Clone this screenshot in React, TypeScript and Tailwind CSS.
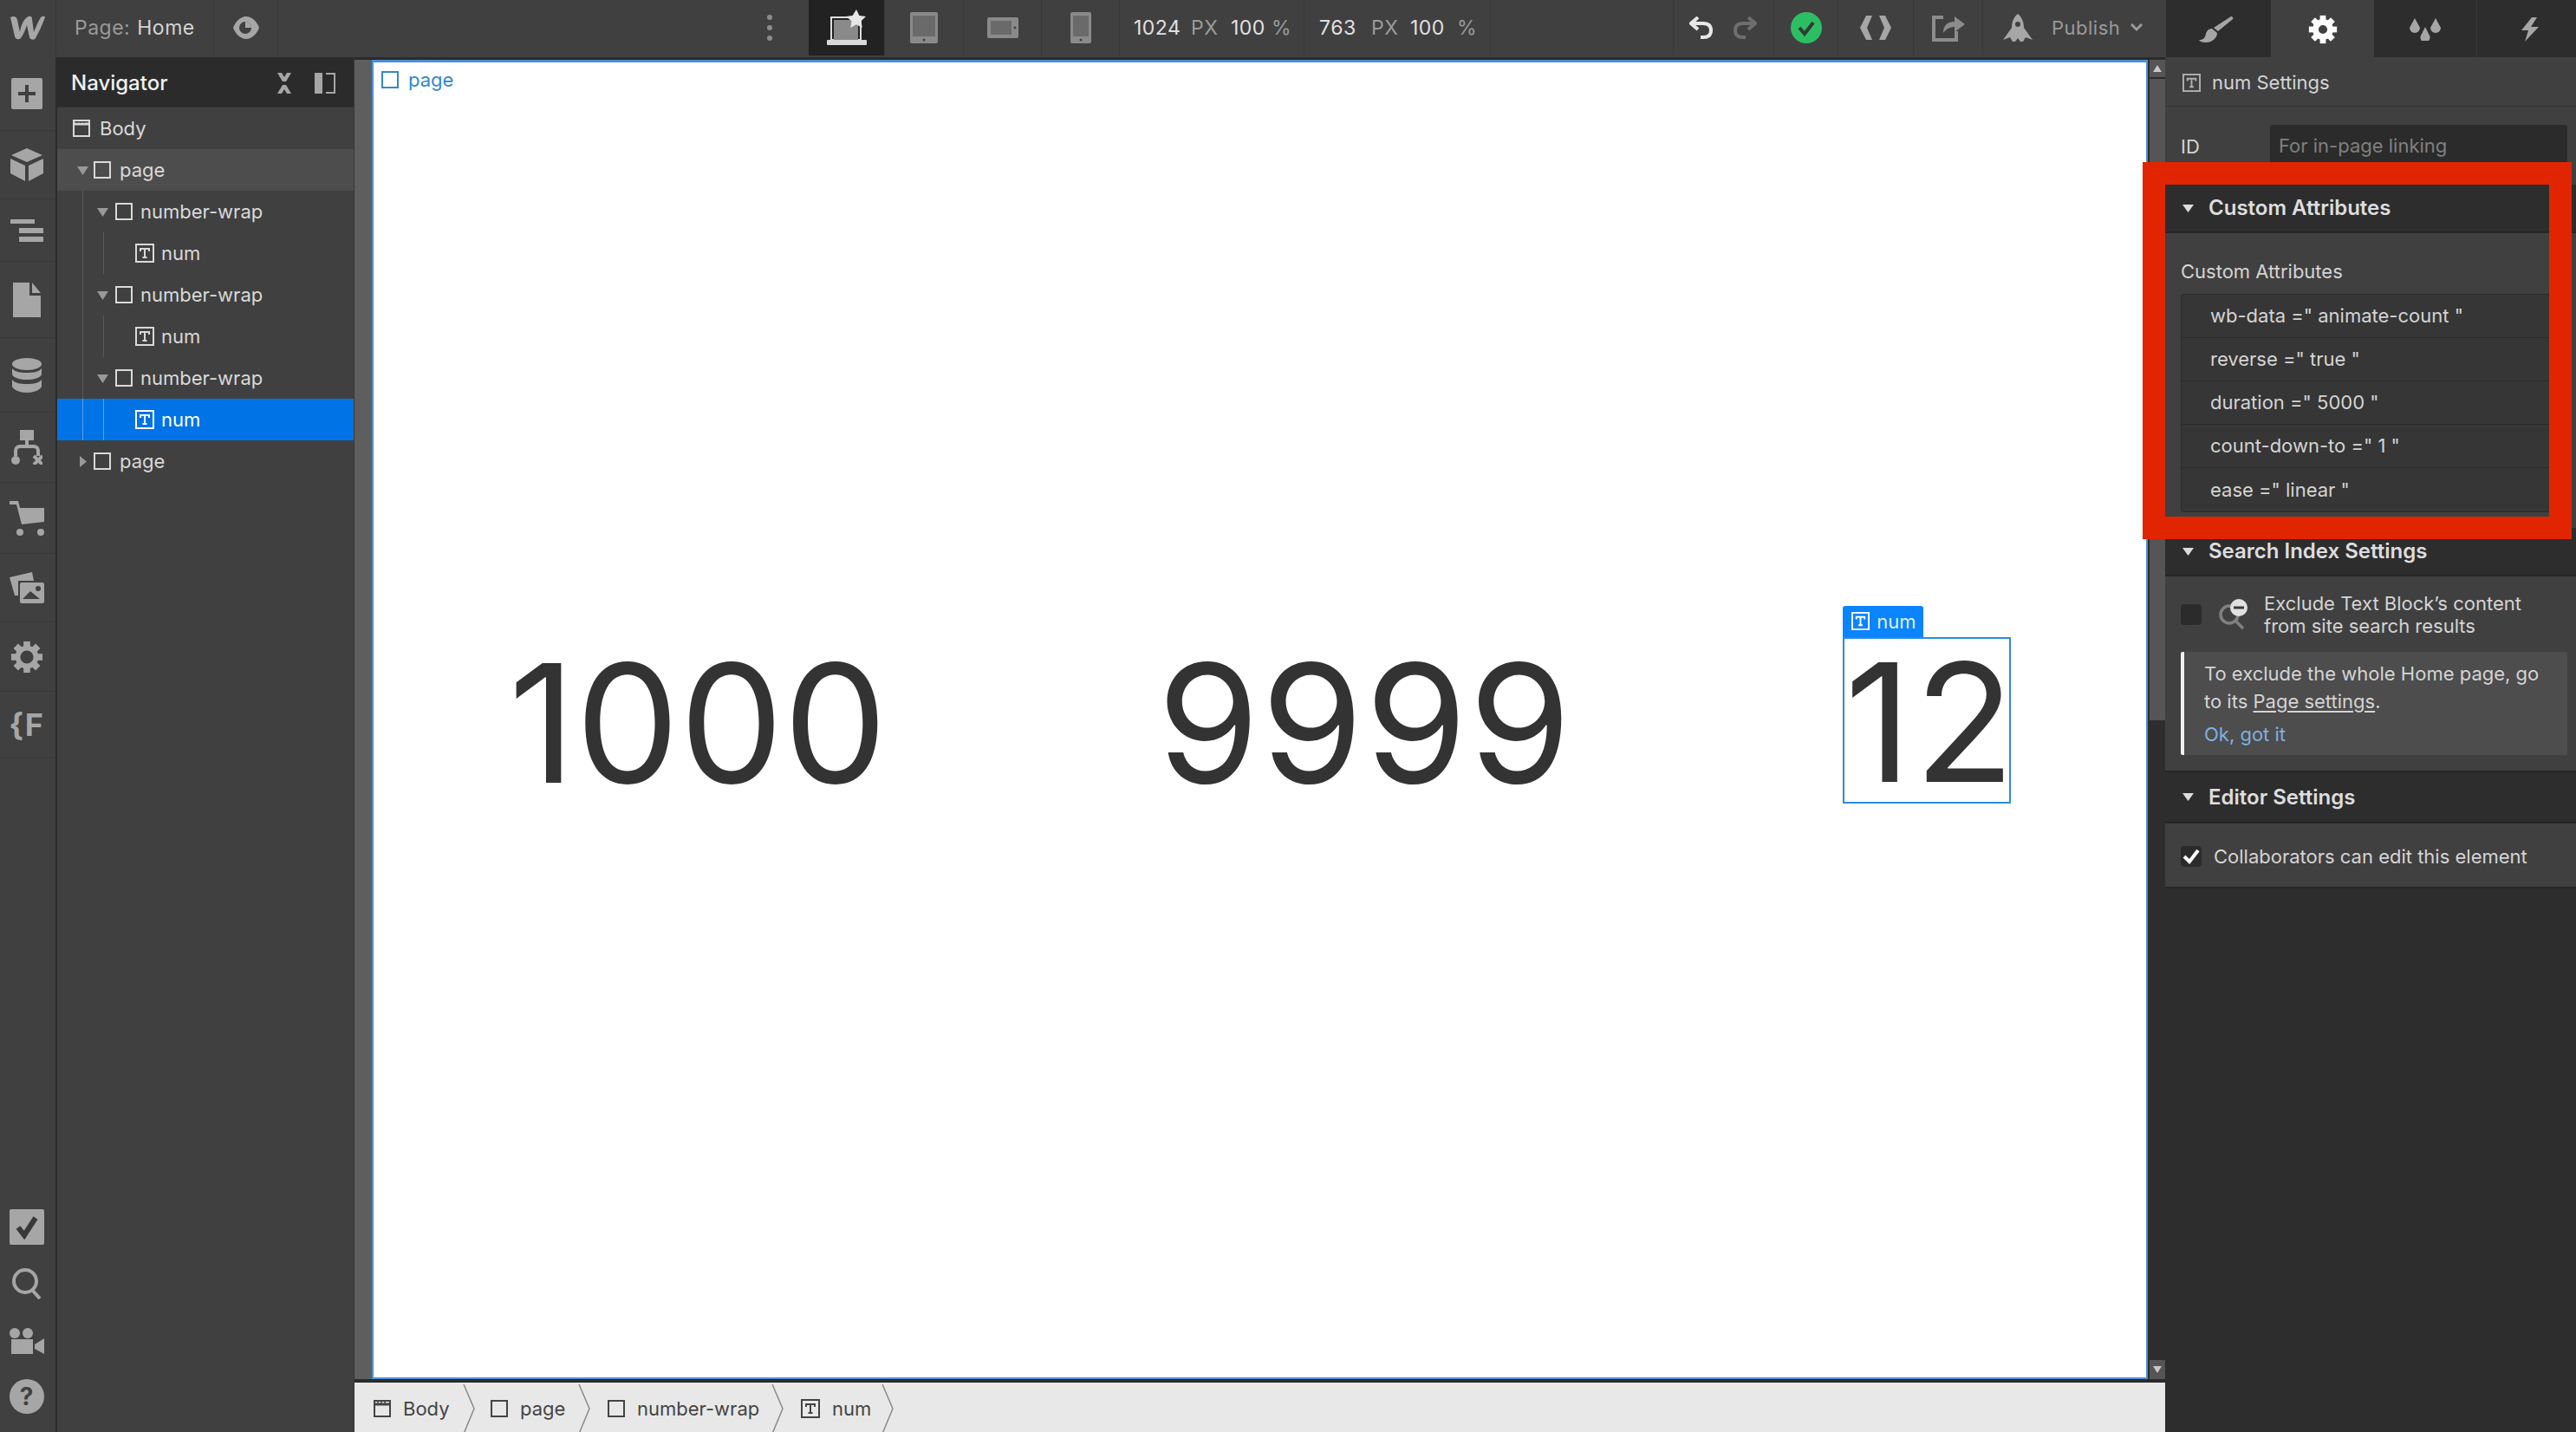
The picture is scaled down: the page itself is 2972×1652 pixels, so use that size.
import type { ReactNode } from 'react';

const GRAY = '#a6a6a6';

function BoxIcon({ color = '#d9d9d9' }: { color?: string }) {
  return (
    <svg width="20" height="20" viewBox="0 0 20 20" className="shrink-0">
      <rect x="1" y="1" width="18" height="18" fill="none" stroke={color} strokeWidth="2" />
    </svg>
  );
}

function TextIcon({ color = '#d9d9d9', size = 22 }: { color?: string; size?: number }) {
  return (
    <svg width={size} height={size} viewBox="0 0 22 22" className="shrink-0">
      <rect x="1" y="1" width="20" height="20" fill="none" stroke={color} strokeWidth="2" />
      <path d="M6 9V6h10v3M11 6v10M8.5 16h5" fill="none" stroke={color} strokeWidth="2" />
    </svg>
  );
}

function BodyIcon({ color = '#d9d9d9' }: { color?: string }) {
  return (
    <svg width="20" height="20" viewBox="0 0 20 20" className="shrink-0">
      <rect x="1" y="1" width="18" height="18" fill="none" stroke={color} strokeWidth="2" />
      <path d="M1 5h18" stroke={color} strokeWidth="3" />
      <path d="M4 3h2M8 3h2M12 3h2" stroke="#404040" strokeWidth="1.5" />
    </svg>
  );
}

function Gear({ size, color, hole = 0.3 }: { size: number; color: string; hole?: number }) {
  const teeth = [0, 45, 90, 135, 180, 225, 270, 315];
  return (
    <svg width={size} height={size} viewBox="0 0 40 40">
      {teeth.map((deg) => (
        <rect key={deg} x="16" y="1" width="8" height="9" fill={color} transform={`rotate(${deg} 20 20)`} />
      ))}
      <circle cx="20" cy="20" r={(14 + 20 * hole) / 2} fill="none" stroke={color} strokeWidth={14 - 20 * hole} />
    </svg>
  );
}

function Caret({ open = true, color = '#999' }: { open?: boolean; color?: string }) {
  return (
    <svg width="13" height="13" viewBox="0 0 13 13" className="shrink-0">
      {open ? <path d="M0 2h13L6.5 12z" fill={color} /> : <path d="M3 0l8 6.5L3 13z" fill={color} />}
    </svg>
  );
}

function Logo() {
  return (
    <svg width="40" height="28" viewBox="0 0 40 28">
      <path
        d="M0 2c4-2 7-1 8 3l3 14c1-7 4-14 8-17 3-2 6-2 6 2l2 15c2-5 5-12 8-17 2-2 4-2 5 0-3 8-8 19-11 24-2 3-6 2-7-1l-3-14c-2 6-4 11-7 15-2 2-6 2-7-2z"
        fill={GRAY}
      />
    </svg>
  );
}

function DeviceDesktop() {
  return (
    <svg width="50" height="42" viewBox="0 0 50 42">
      <rect x="7" y="9" width="34" height="26" fill="none" stroke="#ddd" strokeWidth="2" />
      <rect x="10" y="12" width="28" height="23" fill="#8a8a8a" />
      <rect x="2" y="35" width="46" height="6" rx="1" fill="#d8d8d8" />
      <path d="M36 0l3.4 7 7.6 1-5.5 5.2 1.3 7.8-6.8-3.7-6.8 3.7 1.3-7.8L24 8l7.6-1z" fill="#e6e6e6" />
    </svg>
  );
}

function DeviceTablet({ wide = false, phone = false }: { wide?: boolean; phone?: boolean }) {
  if (wide) {
    return (
      <svg width="36" height="24" viewBox="0 0 36 24">
        <rect width="36" height="24" rx="2" fill="#8a8a8a" />
        <rect x="4" y="4" width="24" height="16" fill="#6a6a6a" />
        <circle cx="32" cy="12" r="1.5" fill="#404040" />
      </svg>
    );
  }
  const w = phone ? 24 : 32;
  return (
    <svg width={w} height="36" viewBox={`0 0 ${w} 36`}>
      <rect width={w} height="36" rx="2" fill="#8a8a8a" />
      <rect x="3" y="4" width={w - 6} height="24" fill="#6a6a6a" />
      <circle cx={w / 2} cy="32" r="1.5" fill="#404040" />
    </svg>
  );
}

function ToolCell({ w, children, dark = false }: { w: string; children: ReactNode; dark?: boolean }) {
  return (
    <div className={`flex h-[64px] items-center justify-center border-r border-[#383838] ${w} ${dark ? 'bg-[#222222]' : ''}`}>
      {children}
    </div>
  );
}

function TopBar() {
  return (
    <div className="flex h-[66px] shrink-0 items-start bg-[#404040]">
      <ToolCell w="w-[65px]"><Logo /></ToolCell>
      <div className="flex h-[64px] w-[182px] items-center gap-[8px] border-r border-[#383838] pl-[21px] text-[23px] tracking-[0.5px]">
        <span className="text-[#9a9a9a]">Page:</span>
        <span className="text-[#d4d4d4]">Home</span>
      </div>
      <ToolCell w="w-[74px]">
        <svg width="30" height="26" viewBox="0 0 30 26">
          <path d="M15 0C8 0 2 7 0 13c2 6 8 13 15 13s13-7 15-13C28 7 22 0 15 0z" fill={GRAY} />
          <circle cx="14" cy="13" r="7" fill="#404040" />
          <path d="M14 6a7 7 0 0 1 7 7h-7z" fill={GRAY} />
        </svg>
      </ToolCell>
      <div className="flex h-[64px] w-[612px] items-center justify-end pr-[42px]">
        <div className="flex flex-col gap-[6px]">
          <span className="block size-[6px] rounded-full bg-[#8c8c8c]" />
          <span className="block size-[6px] rounded-full bg-[#8c8c8c]" />
          <span className="block size-[6px] rounded-full bg-[#8c8c8c]" />
        </div>
      </div>
      <ToolCell w="w-[88px]" dark><DeviceDesktop /></ToolCell>
      <ToolCell w="w-[91px]"><DeviceTablet /></ToolCell>
      <ToolCell w="w-[90px]"><DeviceTablet wide /></ToolCell>
      <ToolCell w="w-[90px]"><DeviceTablet phone /></ToolCell>
      <div className="flex h-[64px] w-[213px] items-center border-r border-[#383838] pl-[16px] text-[23px] tracking-[0.5px]">
        <span className="w-[66px] text-[#e0e0e0]">1024</span>
        <span className="w-[46px] text-[#9a9a9a]">PX</span>
        <span className="w-[47px] text-[#e0e0e0]">100</span>
        <span className="text-[#9a9a9a]">%</span>
      </div>
      <div className="flex h-[64px] w-[215px] items-center border-r border-[#383838] pl-[17px] text-[23px] tracking-[0.5px]">
        <span className="w-[60px] text-[#e0e0e0]">763</span>
        <span className="w-[45px] text-[#9a9a9a]">PX</span>
        <span className="w-[54px] text-[#e0e0e0]">100</span>
        <span className="text-[#9a9a9a]">%</span>
      </div>
      <div className="h-[64px] w-[211px] border-r border-[#383838]" />
      <div className="flex h-[64px] w-[116px] items-center gap-[22px] border-r border-[#383838] pl-[18px]">
        <svg width="28" height="26" viewBox="0 0 28 26">
          <path d="M10 1L2 8l8 7M3 8h13c6 0 9 3 9 8s-3 8-9 8h-3" fill="none" stroke="#e8e8e8" strokeWidth="4" />
        </svg>
        <svg width="28" height="26" viewBox="0 0 28 26">
          <path d="M18 1l8 7-8 7M25 8H12c-6 0-9 3-9 8s3 8 9 8h3" fill="none" stroke="#6e6e6e" strokeWidth="4" />
        </svg>
      </div>
      <ToolCell w="w-[74px]">
        <svg width="36" height="36" viewBox="0 0 36 36">
          <circle cx="18" cy="18" r="18" fill="#2dbe64" />
          <path d="M10 18l6 7 10-13" fill="none" stroke="#2f3b33" strokeWidth="4" />
        </svg>
      </ToolCell>
      <ToolCell w="w-[87px]">
        <svg width="40" height="28" viewBox="0 0 40 28">
          <path d="M9 0h7l-6 14 6 14H9L2 14zM31 0h-7l6 14-6 14h7l7-14z" fill={GRAY} />
        </svg>
      </ToolCell>
      <ToolCell w="w-[80px]">
        <svg width="38" height="32" viewBox="0 0 38 32">
          <path d="M2 4h11M2 2v28h26V20" fill="none" stroke="#8c8c8c" strokeWidth="4" />
          <path d="M13 22c0-9 5-13 13-13V3l12 9-12 9v-6c-5 0-9 2-13 7z" fill="#8c8c8c" />
        </svg>
      </ToolCell>
      <div className="flex h-[64px] w-[211px] items-center pl-[23px]">
        <svg width="34" height="32" viewBox="0 0 34 32" className="shrink-0">
          <path d="M17 0c5 4 7 10 7 16l10 14-8-3-3 5h-3l-3-4-3 4h-3l-3-5-8 3 10-14c0-6 2-12 7-16z" fill={GRAY} />
          <circle cx="17" cy="12" r="3" fill="#404040" />
        </svg>
        <span className="ml-[22px] text-[22px] tracking-[0.5px] text-[#9a9a9a]">Publish</span>
        <svg width="14" height="10" viewBox="0 0 14 10" className="ml-[12px] shrink-0">
          <path d="M1 1l6 6 6-6" fill="none" stroke="#9a9a9a" strokeWidth="3" />
        </svg>
      </div>
      <div className="flex h-[67px] flex-1">
        <div className="flex w-[121px] items-center justify-center bg-[#2d2d2d] pr-[5px]">
          <svg width="40" height="30" viewBox="0 0 40 30">
            <path d="M37 0c2 0 3 2 2 3L22 17l-5-4z" fill={GRAY} />
            <path d="M15 14l6 5c0 6-6 11-13 11-4 0-7-1-8-3 6 0 7-3 8-7 1-4 4-6 7-6z" fill={GRAY} />
          </svg>
        </div>
        <div className="flex w-[119px] items-center justify-center bg-[#404040]">
          <Gear size={34} color="#ffffff" />
        </div>
        <div className="flex w-[119px] items-center justify-center border-r border-[#383838] bg-[#2d2d2d]">
          <svg width="36" height="26" viewBox="0 0 36 26">
            <path d="M6 0l6 11a6 6 0 1 1-12 0zM30 0l6 11a6 6 0 1 1-12 0zM18 10l5 10a5.500 5.500 0 1 1-10 0z" fill={GRAY} />
          </svg>
        </div>
        <div className="flex flex-1 items-center justify-center bg-[#2d2d2d] pl-[7px]">
          <svg width="24" height="28" viewBox="0 0 24 28">
            <path d="M14 0L2 15h8L6 28l16-17h-9l7-11z" fill={GRAY} />
          </svg>
        </div>
      </div>
    </div>
  );
}

function RailCell({ h, children, line = true }: { h: string; children: ReactNode; line?: boolean }) {
  return (
    <div className={`flex w-full items-center justify-center pr-[3px] ${h} ${line ? 'border-b border-[#383838]' : ''}`}>
      {children}
    </div>
  );
}

function LeftRail() {
  return (
    <div className="flex w-[66px] shrink-0 flex-col justify-between border-r-2 border-[#2b2b2b] bg-[#404040] pb-[9px]">
      <div className="flex flex-col">
        <RailCell h="h-[85px]">
          <svg width="36" height="36" viewBox="0 0 36 36">
            <rect width="36" height="36" rx="2" fill={GRAY} />
            <path d="M18 8v20M8 18h20" stroke="#404040" strokeWidth="4" />
          </svg>
        </RailCell>
        <RailCell h="h-[79px]">
          <svg width="38" height="38" viewBox="0 0 38 38">
            <path d="M19 0l18 8-18 8L1 8zM0 12l17 8v18L0 29zM38 12l-17 8v18l17-9z" fill={GRAY} />
          </svg>
        </RailCell>
        <RailCell h="h-[72px]">
          <svg width="38" height="26" viewBox="0 0 38 26">
            <path d="M0 0h28v5H0zM10 10h28v6H10zM10 20h28v6H10z" fill={GRAY} />
          </svg>
        </RailCell>
        <RailCell h="h-[88px]">
          <svg width="32" height="40" viewBox="0 0 32 40">
            <path d="M0 0h19v15h13v25H0zM22 0l10 12H22z" fill={GRAY} />
          </svg>
        </RailCell>
        <RailCell h="h-[86px]">
          <svg width="34" height="40" viewBox="0 0 34 40">
            <ellipse cx="17" cy="7" rx="17" ry="7" fill={GRAY} />
            <path d="M0 12c3 4 9 5 17 5s14-1 17-5v7c-2 4-9 6-17 6S2 23 0 19zM0 25c3 4 9 5 17 5s14-1 17-5v8c-2 4-9 7-17 7S2 37 0 33z" fill={GRAY} />
          </svg>
        </RailCell>
        <RailCell h="h-[81px]">
          <svg width="36" height="40" viewBox="0 0 36 40">
            <rect x="10" width="16" height="12" fill={GRAY} />
            <path d="M18 12v7M5 30v-6c0-3 2-5 5-5h16c3 0 5 2 5 5v6" fill="none" stroke={GRAY} strokeWidth="4" />
            <ellipse cx="5" cy="35" rx="5" ry="5" fill={GRAY} />
            <path d="M26 30l10 10M36 30L26 40" stroke={GRAY} strokeWidth="4" />
          </svg>
        </RailCell>
        <RailCell h="h-[82px]">
          <svg width="40" height="40" viewBox="0 0 40 40">
            <path d="M0 0h10l2 8h28v16L14 27 8 4H0z" fill={GRAY} />
            <circle cx="12" cy="36" r="4" fill={GRAY} />
            <circle cx="36" cy="36" r="4" fill={GRAY} />
          </svg>
        </RailCell>
        <RailCell h="h-[79px]">
          <svg width="40" height="36" viewBox="0 0 40 36">
            <path d="M0 6l26-6 2 10H10v17H6z" fill={GRAY} />
            <rect x="12" y="12" width="28" height="24" rx="2" fill={GRAY} />
            <path d="M15 31l9-9 11 9z" fill="#404040" />
            <circle cx="33" cy="19" r="3" fill="#404040" />
          </svg>
        </RailCell>
        <RailCell h="h-[80px]"><Gear size={38} color={GRAY} hole={0.4} /></RailCell>
        <RailCell h="h-[77px]">
          <span className="text-[36px] font-bold tracking-[1px] text-[#a6a6a6]">{'{F'}</span>
        </RailCell>
      </div>
      <div className="flex flex-col">
        <RailCell h="h-[66px]" line={false}>
          <svg width="40" height="41" viewBox="0 0 40 41">
            <rect width="40" height="41" rx="2" fill={GRAY} />
            <path d="M10 21l7 9 13-20" fill="none" stroke="#383838" strokeWidth="6" />
          </svg>
        </RailCell>
        <RailCell h="h-[66px]" line={false}>
          <svg width="36" height="36" viewBox="0 0 36 36">
            <circle cx="16" cy="15" r="13" fill="none" stroke={GRAY} strokeWidth="4" />
            <path d="M24 25l9 10" stroke={GRAY} strokeWidth="4" />
          </svg>
        </RailCell>
        <RailCell h="h-[65px]" line={false}>
          <svg width="41" height="30" viewBox="0 0 41 30">
            <circle cx="7" cy="6" r="6" fill={GRAY} />
            <circle cx="22" cy="6" r="6" fill={GRAY} />
            <rect x="3" y="13" width="25" height="17" fill={GRAY} />
            <path d="M30 19l11-7v18l-11-6z" fill={GRAY} />
          </svg>
        </RailCell>
        <RailCell h="h-[64px]" line={false}>
          <div className="flex size-[40px] items-center justify-center rounded-full bg-[#a6a6a6] text-[28px] font-bold text-[#404040]">?</div>
        </RailCell>
      </div>
    </div>
  );
}

function Wrap({ children, caret = true }: { children: ReactNode; caret?: boolean }) {
  return (
    <div className="flex h-[48px] items-center">
      <span className="ml-[29px] h-full w-px bg-[#5a5a5a]" />
      <span className="ml-[16px]">{caret && <Caret />}</span>
      <span className="ml-[8px]"><BoxIcon /></span>
      <span className="ml-[9px]">{children}</span>
    </div>
  );
}

function NumRow({ selected = false }: { selected?: boolean }) {
  return (
    <div className={`flex h-[48px] items-center ${selected ? 'bg-[#0073e6] text-white' : ''}`}>
      <span className={`ml-[29px] h-full w-px ${selected ? 'bg-[#5aa0ea]' : 'bg-[#5a5a5a]'}`} />
      <span className={`ml-[23px] h-full w-px ${selected ? 'bg-[#5aa0ea]' : 'bg-[#5a5a5a]'}`} />
      <span className="ml-[36px]"><TextIcon color={selected ? '#ffffff' : '#d9d9d9'} /></span>
      <span className="ml-[8px]">num</span>
    </div>
  );
}

function Navigator() {
  return (
    <div className="flex w-[343px] shrink-0 flex-col border-r border-[#383838] bg-[#404040] text-[22px] text-[#d9d9d9]">
      <div className="flex h-[58px] shrink-0 items-center justify-between border-b border-[#333333] bg-[#2b2b2b] pl-[16px] pr-[21px] pt-[2px]">
        <span className="text-[24px] font-medium text-[#f0f0f0]">Navigator</span>
        <div className="flex items-center gap-[26px]">
          <svg width="18" height="24" viewBox="0 0 18 24">
            <path d="M1 0h5l3 5 3-5h5l-6 10H7zM1 24h5l3-5 3 5h5l-6-10H7z" fill={GRAY} />
          </svg>
          <svg width="24" height="24" viewBox="0 0 24 24">
            <rect width="9" height="24" fill={GRAY} />
            <path d="M13 1h10v22H13" fill="none" stroke={GRAY} strokeWidth="2" />
          </svg>
        </div>
      </div>
      <div className="flex h-[48px] items-center pl-[18px]">
        <BodyIcon />
        <span className="ml-[11px]">Body</span>
      </div>
      <div className="flex h-[48px] items-center bg-[#4d4d4d] pl-[23px]">
        <Caret />
        <span className="ml-[6px]"><BoxIcon /></span>
        <span className="ml-[10px]">page</span>
      </div>
      <Wrap>number-wrap</Wrap>
      <NumRow />
      <Wrap>number-wrap</Wrap>
      <NumRow />
      <Wrap>number-wrap</Wrap>
      <NumRow selected />
      <div className="flex h-[48px] items-center pl-[23px]">
        <Caret open={false} />
        <span className="ml-[6px]"><BoxIcon /></span>
        <span className="ml-[10px]">page</span>
      </div>
    </div>
  );
}

function Crumb({ icon, label, w }: { icon: ReactNode; label: string; w: string }) {
  return (
    <div className={`flex h-full items-center ${w}`}>
      {icon}
      <span className="ml-[14px] text-[22px] text-[#444444]">{label}</span>
      <svg width="14" height="57" viewBox="0 0 14 57" className="ml-auto shrink-0">
        <path d="M1 0l12 28L1 57" fill="none" stroke="#8a8a8a" strokeWidth="1.500" />
      </svg>
    </div>
  );
}

function Canvas() {
  return (
    <div className="flex min-w-0 flex-1 flex-col">
      <div className="flex min-h-0 flex-1 bg-[#5e5e5e] pl-[20px]">
        <div className="relative flex flex-1 items-center justify-around border-x-2 border-t-[3px] border-b-2 border-[#4a90d9] bg-white font-['Inter'] text-[190px] leading-[184px] text-[#333333]">
          <div className="absolute left-[9px] top-[9px] flex items-center gap-[11px] text-[22px] leading-[22px] text-[#3088d0]">
            <BoxIcon color="#3088d0" />
            <span>page</span>
          </div>
          <div className="pt-[6px]">1000</div>
          <div className="pt-[6px] tracking-[2px]">9999</div>
          <div className="relative">
            <div className="absolute left-0 -top-[36px] flex h-[36px] w-[93px] items-center gap-[8px] rounded-t-[3px] bg-[#0a84ff] pl-[10px] text-[22px] leading-[22px] text-[#dff0ff]">
              <TextIcon color="#ffffff" size={21} />
              <span>num</span>
            </div>
            <div className="w-[194px] border-2 border-[#2b8be0] pt-[4px] text-center tracking-[3px]">12</div>
          </div>
        </div>
        <div className="flex w-[20px] shrink-0 flex-col bg-[#2d2d2d] pl-[2px]">
          <div className="flex h-[22px] shrink-0 items-center justify-center border-b-2 border-[#2b2b2b] bg-[#555555]">
            <svg width="10" height="8" viewBox="0 0 10 8"><path d="M5 0l5 8H0z" fill="#c8c8c8" /></svg>
          </div>
          <div className="flex-1">
            <div className="h-[740px] bg-[#555555]" />
          </div>
          <div className="flex h-[22px] shrink-0 items-center justify-center bg-[#555555]">
            <svg width="10" height="8" viewBox="0 0 10 8"><path d="M5 8l5-8H0z" fill="#c8c8c8" /></svg>
          </div>
        </div>
      </div>
      <div className="flex h-[61px] shrink-0 items-center border-t-4 border-[#2b2b2b] bg-[#e8e8e8] pl-[22px] pr-[2px] pt-[3px]">
        <Crumb icon={<BodyIcon color="#444444" />} label="Body" w="w-[117px]" />
        <div className="w-[18px]" />
        <Crumb icon={<BoxIcon color="#444444" />} label="page" w="w-[115px]" />
        <div className="w-[20px]" />
        <Crumb icon={<BoxIcon color="#444444" />} label="number-wrap" w="w-[203px]" />
        <div className="w-[20px]" />
        <Crumb icon={<TextIcon color="#444444" />} label="num" w="w-[107px]" />
      </div>
    </div>
  );
}

function SectionHead({ title, h = 'h-[56px]' }: { title: string; h?: string }) {
  return (
    <div className={`flex items-center gap-[17px] border-b-2 border-[#262626] bg-[#2d2d2d] pl-[20px] text-[24px] font-semibold text-[#dddddd] ${h}`}>
      <svg width="13" height="9" viewBox="0 0 13 9"><path d="M0 0h13L6.500 9z" fill="#dddddd" /></svg>
      {title}
    </div>
  );
}

function AttrRow({ text, last = false }: { text: string; last?: boolean }) {
  return (
    <div className={`flex h-[50px] items-center pl-[33px] ${last ? '' : 'border-b border-[#2b2b2b]'}`}>{text}</div>
  );
}

function RightPanel() {
  return (
    <div className="flex w-[474px] shrink-0 flex-col bg-[#2d2d2d] font-['Inter'] text-[22px] text-[#d4d4d4]">
      <div className="flex h-[57px] items-center gap-[13px] border-b border-[#353535] bg-[#404040] pl-[20px] pt-[3px]">
        <TextIcon color="#b0b0b0" size={21} />
        <span>num Settings</span>
      </div>
      <div className="flex h-[90px] items-start bg-[#404040] pl-[18px] pt-[21px]">
        <span className="w-[103px] pt-[9px]">ID</span>
        <div className="flex h-[46px] w-[343px] items-center rounded-t-[3px] bg-[#2b2b2b] pl-[10px] pt-[2px] text-[#808080]">For in-page linking</div>
      </div>
      <SectionHead title="Custom Attributes" />
      <div className="h-[340px] bg-[#404040] pl-[18px] pr-[6px] pt-[28px]">
        <div className="relative flex h-[42px] items-start">
          Custom Attributes
          <span className="absolute right-[0px] top-[12px] h-[3px] w-[14px] bg-[#b0b0b0]" />
        </div>
        <div className="rounded-[3px] border border-[#2b2b2b] bg-[#363636]">
          <AttrRow text={'wb-data =" animate-count "'} />
          <AttrRow text={'reverse =" true "'} />
          <AttrRow text={'duration =" 5000 "'} />
          <AttrRow text={'count-down-to =" 1 "'} />
          <AttrRow text={'ease =" linear "'} last />
        </div>
      </div>
      <SectionHead title="Search Index Settings" />
      <div className="h-[226px] border-b-2 border-[#262626] bg-[#404040] pl-[18px] pr-[10px]">
        <div className="flex h-[87px] items-center">
          <span className="block size-[24px] shrink-0 rounded-[4px] bg-[#2b2b2b]" />
          <svg width="36" height="36" viewBox="0 0 36 36" className="ml-[19px] shrink-0">
            <circle cx="13" cy="18" r="10" fill="none" stroke="#808080" strokeWidth="3.500" />
            <path d="M20 25l9 9" stroke="#808080" strokeWidth="3.500" />
            <circle cx="24" cy="10" r="10" fill="#e0e0e0" />
            <path d="M18 10h12" stroke="#383838" strokeWidth="3" />
          </svg>
          <div className="ml-[17px] leading-[26px]">
            Exclude Text Block’s content<br />from site search results
          </div>
        </div>
        <div className="h-[119px] rounded-[2px] border-l-4 border-[#f2f2f2] bg-[#4d4d4d] pl-[23px] pt-[9px] leading-[32px]">
          To exclude the whole Home page, go<br />
          to its <span className="underline underline-offset-[3px]">Page settings</span>.
          <div className="mt-[6px] text-[#80b0e0]">Ok, got it</div>
        </div>
      </div>
      <SectionHead title="Editor Settings" h="h-[59px]" />
      <div className="flex h-[75px] items-center border-b-2 border-[#262626] bg-[#404040] pl-[18px] pt-[3px]">
        <span className="flex size-[24px] items-center justify-center rounded-[4px] bg-[#2b2b2b]">
          <svg width="20" height="18" viewBox="0 0 20 18">
            <path d="M2 9l6 6L18 2" fill="none" stroke="#ffffff" strokeWidth="4" />
          </svg>
        </span>
        <span className="ml-[14px]">Collaborators can edit this element</span>
      </div>
    </div>
  );
}

export default function App() {
  return (
    <div className="relative flex h-[1652px] w-[2972px] flex-col overflow-hidden bg-[#2b2b2b] font-['Inter',sans-serif]">
      <TopBar />
      <div className="flex min-h-0 flex-1">
        <LeftRail />
        <Navigator />
        <div className="flex min-w-0 flex-1 flex-col pt-[3px]">
          <Canvas />
        </div>
        <RightPanel />
      </div>
      {/* red annotation box from the original screenshot */}
      <div className="pointer-events-none absolute left-[2472px] top-[187px] h-[435px] w-[495px] border-[26px] border-[#e12500]" />
    </div>
  );
}
